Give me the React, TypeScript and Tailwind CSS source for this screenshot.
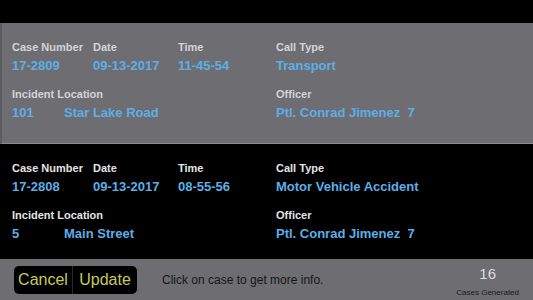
const FONT = { fontFamily: '"Liberation Sans", Arial, sans-serif' };

type CaseItem = {
	number: string;
	date: string;
	time: string;
	callType: string;
	streetNo: string;
	street: string;
	officer: string;
	selected?: boolean;
};

const cases: CaseItem[] = [
	{
		number: "17-2809",
		date: "09-13-2017",
		time: "11-45-54",
		callType: "Transport",
		streetNo: "101",
		street: "Star Lake Road",
		officer: "Ptl. Conrad Jimenez  7",
		selected: true,
	},
	{
		number: "17-2808",
		date: "09-13-2017",
		time: "08-55-56",
		callType: "Motor Vehicle Accident",
		streetNo: "5",
		street: "Main Street",
		officer: "Ptl. Conrad Jimenez  7",
	},
];

function Label({ children, dark }: { children: string; dark?: boolean }) {
	return (
		<div
			className={`text-[11px] leading-[14px] font-bold whitespace-pre ${
				dark ? "text-[#e4e4e4]" : "text-[#d4d4d6]"
			}`}
		>
			{children}
		</div>
	);
}

function Value({ children }: { children: string }) {
	return (
		<div className="mt-1 text-[13px] leading-[16px] font-bold text-[#5eaee6] whitespace-pre">
			{children}
		</div>
	);
}

function CaseRow({ item }: { item: CaseItem }) {
	const dark = !item.selected;
	return (
		<div
			className={`flex pl-3 pt-[17px] ${
				item.selected
					? "h-[121px] bg-[#6d6d72] border-l-2 border-[#5c5c60] pl-[10px] border-b border-b-[#8c8c90]"
					: "h-[115px] bg-black"
			}`}
		>
			<div className="w-[264px] flex flex-col">
				<div className="flex">
					<div className="w-[81px]">
						<Label dark={dark}>Case Number</Label>
						<Value>{item.number}</Value>
					</div>
					<div className="w-[85px]">
						<Label dark={dark}>Date</Label>
						<Value>{item.date}</Value>
					</div>
					<div className="w-[98px]">
						<Label dark={dark}>Time</Label>
						<Value>{item.time}</Value>
					</div>
				</div>
				<div className="mt-[13px]">
					<Label dark={dark}>Incident Location</Label>
					<div className="flex">
						<div className="w-[52px]">
							<Value>{item.streetNo}</Value>
						</div>
						<Value>{item.street}</Value>
					</div>
				</div>
			</div>
			<div className="flex flex-col">
				<div>
					<Label dark={dark}>Call Type</Label>
					<Value>{item.callType}</Value>
				</div>
				<div className="mt-[13px]">
					<Label dark={dark}>Officer</Label>
					<Value>{item.officer}</Value>
				</div>
			</div>
		</div>
	);
}

function App() {
	return (
		<div className="w-[533px] h-[300px] bg-black flex flex-col overflow-hidden" style={FONT}>
			<div className="h-[23px] shrink-0" />
			{cases.map((item) => (
				<CaseRow key={item.number} item={item} />
			))}
			<div className="flex-1 bg-[#6d6d72] flex items-center pl-[14px] pr-[14px]">
				<div className="flex h-[28px]">
					<button className="w-[59px] h-full bg-black rounded-l-[5px] text-[16px] text-[#c4cb5c] border-r border-[#2a2a2a]">
						Cancel
					</button>
					<button className="w-[64px] h-full bg-black rounded-r-[5px] text-[16px] text-[#c4cb5c]">
						Update
					</button>
				</div>
				<div className="ml-[25px] text-[12px] text-[#161618] mt-[1px]">
					Click on case to get more info.
				</div>
				<div className="ml-auto flex flex-col items-center pt-[3px]">
					<div className="text-[15px] leading-[18px] text-[#dcdcde]">16</div>
					<div className="mt-[5px] text-[8px] leading-[10px] text-[#1a1a1c]">Cases Generated</div>
				</div>
			</div>
		</div>
	);
}

export default App;
